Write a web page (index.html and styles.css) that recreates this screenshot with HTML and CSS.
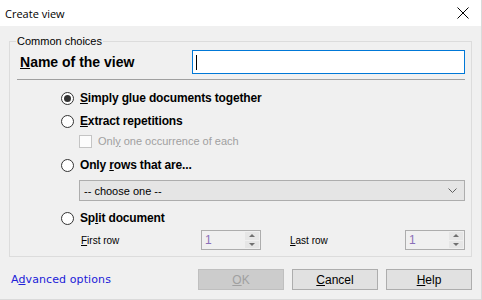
FILE: index.html
```html
<!DOCTYPE html>
<html>
    <head>
        <meta charset="UTF-8">
        <title>Create view</title>
        <link rel="stylesheet" href="styles.css">
    </head>
    <body>
        <div class="dialog">
            <div class="titlebar">
                <span class="title">Create view</span>
                <svg class="close" width="12" height="12" viewBox="0 0 12 12">
                    <path d="M0.5 0.5L11.5 11.5M11.5 0.5L0.5 11.5" stroke="#000" stroke-width="1" fill="none"/>
                </svg>
            </div>

            <fieldset class="group">
                <legend>Common choices</legend>

                <div class="name-row">
                    <label class="name-label"><u>N</u>ame of the view</label>
                    <div class="text-box"><span class="caret"></span></div>
                </div>
                <div class="sep"></div>

                <div class="options">
                    <div class="radio-row first">
                        <span class="radio on"></span>
                        <span class="opt-text"><u>S</u>imply glue documents together</span>
                    </div>
                    <div class="radio-row">
                        <span class="radio"></span>
                        <span class="opt-text"><u>E</u>xtract repetitions</span>
                    </div>
                    <div class="check-row">
                        <span class="check"></span>
                        <span class="check-text">Onl<u>y</u> one occurrence of each</span>
                    </div>
                    <div class="radio-row rows">
                        <span class="radio"></span>
                        <span class="opt-text">Only <u>r</u>ows that are...</span>
                    </div>
                    <div class="select">
                        <span>-- choose one --</span>
                        <svg width="9" height="5" viewBox="0 0 9 5">
                            <path d="M0.5 0.5L4.5 4.5L8.5 0.5" stroke="#606060" fill="none"/>
                        </svg>
                    </div>
                    <div class="radio-row split">
                        <span class="radio"></span>
                        <span class="opt-text">Sp<u>l</u>it document</span>
                    </div>
                    <div class="spin-row">
                        <span class="spin-label first-label"><u>F</u>irst row</span>
                        <div class="spin">
                            <span class="spin-val">1</span>
                            <span class="spin-btns">
                                <span class="up"></span>
                                <span class="down"></span>
                            </span>
                        </div>
                        <span class="spin-label last-label"><u>L</u>ast row</span>
                        <div class="spin">
                            <span class="spin-val">1</span>
                            <span class="spin-btns">
                                <span class="up"></span>
                                <span class="down"></span>
                            </span>
                        </div>
                    </div>
                </div>
            </fieldset>

            <div class="footer">
                <a class="advanced">A<u>d</u>vanced options</a>
                <div class="buttons">
                    <button class="btn disabled"><u>O</u>K</button>
                    <button class="btn"><u>C</u>ancel</button>
                    <button class="btn"><u>H</u>elp</button>
                </div>
            </div>
        </div>
    </body>
</html>
```

FILE: styles.css
```css
body{margin:0;font-family:"Liberation Sans",Arial,sans-serif;font-size:11px;color:#000;}

.dialog{
    width:482px;
    height:300px;
    background-color:#f0f0f0;
    box-sizing:border-box;
    border-right:1px solid #dadada;
    border-bottom:1px solid #dadada;
}
.titlebar{
    display:flex;
    align-items:center;
    justify-content:space-between;
    height:26px;
    padding:0 12px 0 5px;
    background-color:#ffffff;
}
.title{
    font-family:"Open Sans",sans-serif;
    font-size:11px;
}

.group{
    margin:8px 9px 0 9px;
    padding:0 6px 6px 7px;
    border:1px solid #dcdcdc;
}
.group legend{
    padding:0 1px;
    margin-left:-1px;
    line-height:14px;
    font-size:11px;
}

.name-row{
    display:flex;
    align-items:center;
    justify-content:space-between;
    margin-top:2px;
}
.name-label{
    margin-left:3px;
    font-weight:bold;
    font-size:14px;
}
.text-box{
    display:flex;
    align-items:center;
    box-sizing:border-box;
    width:273px;
    height:24px;
    padding-left:3px;
    border:1px solid #0078d7;
    background-color:#ffffff;
}
.caret{
    width:1px;
    height:15px;
    background-color:#000;
}
.sep{
    height:1px;
    margin-top:5px;
    background-color:#a0a0a0;
}

.options{
    padding-left:44px;
}
.radio-row{
    display:flex;
    align-items:center;
    height:20px;
    margin-top:3px;
}
.radio-row.first{margin-top:8px;}
.radio-row.rows{margin-top:4px;}
.radio-row.split{margin-top:7px;}
.radio{
    position:relative;
    box-sizing:border-box;
    width:13px;
    height:13px;
    border:1px solid #333333;
    border-radius:50%;
    background-color:#ffffff;
}
.radio.on::after{
    content:"";
    position:absolute;
    top:2px;
    left:2px;
    width:7px;
    height:7px;
    border-radius:50%;
    background-color:#333333;
}
.opt-text{
    margin-left:6px;
    font-weight:bold;
    font-size:12px;
    letter-spacing:-0.15px;
}
.check-row{
    display:flex;
    align-items:center;
    height:20px;
    margin-left:18px;
}
.check{
    box-sizing:border-box;
    width:13px;
    height:13px;
    border:1px solid #c4c4c4;
    background-color:#fcfcfc;
}
.check-text{
    margin-left:6px;
    color:#a0a0a0;
}

.select{
    display:flex;
    align-items:center;
    justify-content:space-between;
    box-sizing:border-box;
    height:21px;
    margin:5px 0 0 18px;
    padding:0 7px 0 4px;
    border:1px solid #adadad;
    background-color:#e5e5e5;
}

.spin-row{
    display:flex;
    align-items:center;
    height:20px;
    margin:2px 0 0 18px;
}
.spin-label{
    padding-left:2px;
    box-sizing:border-box;
    font-size:10px;
}
.first-label{width:122px;}
.last-label{width:117px;margin-left:27px;}
.spin{
    display:flex;
    justify-content:space-between;
    box-sizing:border-box;
    width:60px;
    height:20px;
    padding:1px;
    border:1px solid #adadad;
    background-color:#f0f0f0;
}
.spin-val{
    padding-left:2px;
    line-height:16px;
    font-size:12px;
    color:#8a6fb8;
}
.spin-btns{
    display:flex;
    flex-direction:column;
    width:14px;
    gap:1px;
}
.spin-btns span{
    flex:1;
    display:flex;
    align-items:center;
    justify-content:center;
    background-color:#e6e6e6;
}
.spin-btns .up::before,.spin-btns .down::before{
    content:"";
    border-left:3px solid transparent;
    border-right:3px solid transparent;
}
.spin-btns .up::before{border-bottom:3px solid #707070;}
.spin-btns .down::before{border-top:3px solid #707070;}

.footer{
    display:flex;
    align-items:center;
    justify-content:space-between;
    margin-top:12px;
    padding:0 9px 0 11px;
}
.advanced{
    color:#2020d8;
    font-family:"DejaVu Sans",sans-serif;
    font-size:11px;
    letter-spacing:0.1px;
}
.advanced u{text-decoration-color:#2020d8;}
.buttons{
    display:flex;
    gap:8px;
}
.btn{
    box-sizing:border-box;
    width:86px;
    height:21px;
    padding:0;
    border:1px solid #adadad;
    background-color:#e1e1e1;
    font-family:"Liberation Sans",Arial,sans-serif;
    font-size:12px;
    color:#000;
}
.btn.disabled{
    border-color:#bfbfbf;
    background-color:#cccccc;
    color:#a0a0a0;
}
```
